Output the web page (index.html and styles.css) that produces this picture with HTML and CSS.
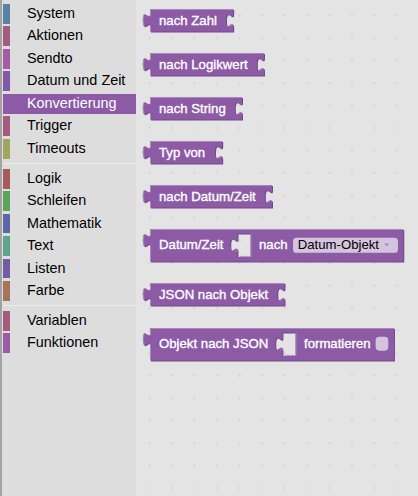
FILE: index.html
```html
<!DOCTYPE html>
<html lang="de">
<head>
<meta charset="utf-8">
<title>Blockly Toolbox</title>
<link rel="stylesheet" href="styles.css">
</head>
<body>
<div class="app">
  <nav class="toolbox">
    <div class="row"><span class="bar c-system"></span><span class="label">System</span></div>
    <div class="row"><span class="bar c-aktionen"></span><span class="label">Aktionen</span></div>
    <div class="row"><span class="bar c-sendto"></span><span class="label">Sendto</span></div>
    <div class="row"><span class="bar c-datum"></span><span class="label">Datum und Zeit</span></div>
    <div class="row sel"><span class="bar c-konv"></span><span class="label">Konvertierung</span></div>
    <div class="row"><span class="bar c-trigger"></span><span class="label">Trigger</span></div>
    <div class="row"><span class="bar c-timeouts"></span><span class="label">Timeouts</span></div>
    <div class="sep"></div>
    <div class="row"><span class="bar c-logik"></span><span class="label">Logik</span></div>
    <div class="row"><span class="bar c-schleifen"></span><span class="label">Schleifen</span></div>
    <div class="row"><span class="bar c-mathe"></span><span class="label">Mathematik</span></div>
    <div class="row"><span class="bar c-text"></span><span class="label">Text</span></div>
    <div class="row"><span class="bar c-listen"></span><span class="label">Listen</span></div>
    <div class="row"><span class="bar c-farbe"></span><span class="label">Farbe</span></div>
    <div class="sep"></div>
    <div class="row"><span class="bar c-variablen"></span><span class="label">Variablen</span></div>
    <div class="row"><span class="bar c-funktionen"></span><span class="label">Funktionen</span></div>
  </nav>

  <main class="flyout">
    <svg class="grid" xmlns="http://www.w3.org/2000/svg">
      <defs>
        <pattern id="dots" patternUnits="userSpaceOnUse" x="2.25" y="4.25" width="22.5" height="22.5">
          <path d="M9.75,11.25 h3 M11.25,9.75 v3" class="gridline"/>
        </pattern>
      </defs>
      <rect width="100%" height="100%" fill="url(#dots)"/>
    </svg>

    <div class="blocks">
      <!-- nach Zahl -->
      <svg class="blk" width="92.2" height="22.5" viewBox="-8 0 92.2 22.5">
        <path class="dark" transform="translate(1,1)" d="M0,0 H83.2 v4.5 c0,9 -7.2,-7.2 -7.2,6.75 s7.2,-2.25 7.2,6.75 V22.5 H0 V18 C0,9 -7.2,25.2 -7.2,11.25 C-7.2,-2.7 0,13.5 0,4.5 Z"/>
        <path class="main" d="M0,0 H83.2 v4.5 c0,9 -7.2,-7.2 -7.2,6.75 s7.2,-2.25 7.2,6.75 V22.5 H0 V18 C0,9 -7.2,25.2 -7.2,11.25 C-7.2,-2.7 0,13.5 0,4.5 Z"/>
        <path class="light" d="M0.5,22 V16.65 m-6.62,-0.45 q-1.37,-4.95 0,-9.9 m6.62,0.9 V0.5 H82.7 M78.7,17.37 l3.3,-1.9"/>
        <text class="t" x="9" y="16.3">nach Zahl</text>
      </svg>

      <!-- nach Logikwert -->
      <svg class="blk" width="123" height="22.5" viewBox="-8 0 123 22.5">
        <path class="dark" transform="translate(1,1)" d="M0,0 H114 v4.5 c0,9 -7.2,-7.2 -7.2,6.75 s7.2,-2.25 7.2,6.75 V22.5 H0 V18 C0,9 -7.2,25.2 -7.2,11.25 C-7.2,-2.7 0,13.5 0,4.5 Z"/>
        <path class="main" d="M0,0 H114 v4.5 c0,9 -7.2,-7.2 -7.2,6.75 s7.2,-2.25 7.2,6.75 V22.5 H0 V18 C0,9 -7.2,25.2 -7.2,11.25 C-7.2,-2.7 0,13.5 0,4.5 Z"/>
        <path class="light" d="M0.5,22 V16.65 m-6.62,-0.45 q-1.37,-4.95 0,-9.9 m6.62,0.9 V0.5 H113.5 M109.5,17.37 l3.3,-1.9"/>
        <text class="t" x="9" y="16.3">nach Logikwert</text>
      </svg>

      <!-- nach String -->
      <svg class="blk" width="101" height="22.5" viewBox="-8 0 101 22.5">
        <path class="dark" transform="translate(1,1)" d="M0,0 H92 v4.5 c0,9 -7.2,-7.2 -7.2,6.75 s7.2,-2.25 7.2,6.75 V22.5 H0 V18 C0,9 -7.2,25.2 -7.2,11.25 C-7.2,-2.7 0,13.5 0,4.5 Z"/>
        <path class="main" d="M0,0 H92 v4.5 c0,9 -7.2,-7.2 -7.2,6.75 s7.2,-2.25 7.2,6.75 V22.5 H0 V18 C0,9 -7.2,25.2 -7.2,11.25 C-7.2,-2.7 0,13.5 0,4.5 Z"/>
        <path class="light" d="M0.5,22 V16.65 m-6.62,-0.45 q-1.37,-4.95 0,-9.9 m6.62,0.9 V0.5 H91.5 M87.5,17.37 l3.3,-1.9"/>
        <text class="t" x="9" y="16.3">nach String</text>
      </svg>

      <!-- Typ von -->
      <svg class="blk" width="81.2" height="22.5" viewBox="-8 0 81.2 22.5">
        <path class="dark" transform="translate(1,1)" d="M0,0 H72.2 v4.5 c0,9 -7.2,-7.2 -7.2,6.75 s7.2,-2.25 7.2,6.75 V22.5 H0 V18 C0,9 -7.2,25.2 -7.2,11.25 C-7.2,-2.7 0,13.5 0,4.5 Z"/>
        <path class="main" d="M0,0 H72.2 v4.5 c0,9 -7.2,-7.2 -7.2,6.75 s7.2,-2.25 7.2,6.75 V22.5 H0 V18 C0,9 -7.2,25.2 -7.2,11.25 C-7.2,-2.7 0,13.5 0,4.5 Z"/>
        <path class="light" d="M0.5,22 V16.65 m-6.62,-0.45 q-1.37,-4.95 0,-9.9 m6.62,0.9 V0.5 H71.7 M67.7,17.37 l3.3,-1.9"/>
        <text class="t" x="9" y="16.3">Typ von</text>
      </svg>

      <!-- nach Datum/Zeit -->
      <svg class="blk" width="131" height="22.5" viewBox="-8 0 131 22.5">
        <path class="dark" transform="translate(1,1)" d="M0,0 H122 v4.5 c0,9 -7.2,-7.2 -7.2,6.75 s7.2,-2.25 7.2,6.75 V22.5 H0 V18 C0,9 -7.2,25.2 -7.2,11.25 C-7.2,-2.7 0,13.5 0,4.5 Z"/>
        <path class="main" d="M0,0 H122 v4.5 c0,9 -7.2,-7.2 -7.2,6.75 s7.2,-2.25 7.2,6.75 V22.5 H0 V18 C0,9 -7.2,25.2 -7.2,11.25 C-7.2,-2.7 0,13.5 0,4.5 Z"/>
        <path class="light" d="M0.5,22 V16.65 m-6.62,-0.45 q-1.37,-4.95 0,-9.9 m6.62,0.9 V0.5 H121.5 M117.5,17.37 l3.3,-1.9"/>
        <text class="t" x="9" y="16.3">nach Datum/Zeit</text>
      </svg>

      <!-- Datum/Zeit [ ] nach [Datum-Objekt] -->
      <svg class="blk" width="262.3" height="32.4" viewBox="-8 0 262.3 32.4">
        <path class="dark" transform="translate(1,1)" fill-rule="evenodd" d="M0,0 H253.3 V32.4 H0 V18 C0,9 -7.2,25.2 -7.2,11.25 C-7.2,-2.7 0,13.5 0,4.5 Z M100.5,4.5 H87.45 v4.5 c0,9 -7.2,-7.2 -7.2,6.75 s7.2,-2.25 7.2,6.75 V27.9 H100.5 Z"/>
        <path class="main" fill-rule="evenodd" d="M0,0 H253.3 V32.4 H0 V18 C0,9 -7.2,25.2 -7.2,11.25 C-7.2,-2.7 0,13.5 0,4.5 Z M100.5,4.5 H87.45 v4.5 c0,9 -7.2,-7.2 -7.2,6.75 s7.2,-2.25 7.2,6.75 V27.9 H100.5 Z"/>
        <path class="light" d="M0.5,31.9 V16.65 m-6.62,-0.45 q-1.37,-4.95 0,-9.9 m6.62,0.9 V0.5 H252.8 M100.95,4.95 v22.5 h-11.25 M85.47,22.14 l3.02,-1.62"/>
        <text class="t" x="9" y="20.3">Datum/Zeit</text>
        <text class="t" x="109" y="20.3">nach</text>
        <rect class="field" x="143" y="8.8" width="105" height="15" rx="3.6"/>
        <text class="ft" x="147.7" y="20.3">Datum-Objekt</text>
        <polygon class="arrow" points="234.2,14.4 239.2,14.4 236.7,17.2"/>
      </svg>

      <!-- JSON nach Objekt -->
      <svg class="blk" width="143.5" height="22.5" viewBox="-8 0 143.5 22.5">
        <path class="dark" transform="translate(1,1)" d="M0,0 H134.5 v4.5 c0,9 -7.2,-7.2 -7.2,6.75 s7.2,-2.25 7.2,6.75 V22.5 H0 V18 C0,9 -7.2,25.2 -7.2,11.25 C-7.2,-2.7 0,13.5 0,4.5 Z"/>
        <path class="main" d="M0,0 H134.5 v4.5 c0,9 -7.2,-7.2 -7.2,6.75 s7.2,-2.25 7.2,6.75 V22.5 H0 V18 C0,9 -7.2,25.2 -7.2,11.25 C-7.2,-2.7 0,13.5 0,4.5 Z"/>
        <path class="light" d="M0.5,22 V16.65 m-6.62,-0.45 q-1.37,-4.95 0,-9.9 m6.62,0.9 V0.5 H134 M130,17.37 l3.3,-1.9"/>
        <text class="t" x="9" y="16.3">JSON nach Objekt</text>
      </svg>

      <!-- Objekt nach JSON [ ] formatieren [x] -->
      <svg class="blk" width="253" height="32.4" viewBox="-8 0 253 32.4">
        <path class="dark" transform="translate(1,1)" fill-rule="evenodd" d="M0,0 H244 V32.4 H0 V18 C0,9 -7.2,25.2 -7.2,11.25 C-7.2,-2.7 0,13.5 0,4.5 Z M145.5,4.5 H132.45 v4.5 c0,9 -7.2,-7.2 -7.2,6.75 s7.2,-2.25 7.2,6.75 V27.9 H145.5 Z"/>
        <path class="main" fill-rule="evenodd" d="M0,0 H244 V32.4 H0 V18 C0,9 -7.2,25.2 -7.2,11.25 C-7.2,-2.7 0,13.5 0,4.5 Z M145.5,4.5 H132.45 v4.5 c0,9 -7.2,-7.2 -7.2,6.75 s7.2,-2.25 7.2,6.75 V27.9 H145.5 Z"/>
        <path class="light" d="M0.5,31.9 V16.65 m-6.62,-0.45 q-1.37,-4.95 0,-9.9 m6.62,0.9 V0.5 H243.5 M145.95,4.95 v22.5 h-11.25 M130.47,22.14 l3.02,-1.62"/>
        <text class="t" x="9" y="20.3">Objekt nach JSON</text>
        <text class="t" x="154" y="20.3">formatieren</text>
        <rect class="field" x="225.7" y="8.7" width="12.6" height="14" rx="3.6"/>
      </svg>
    </div>
  </main>
</div>
</body>
</html>
```

FILE: styles.css
```css
* {
  box-sizing: border-box;
}

html,
body {
  margin: 0;
  padding: 0;
  height: 100%;
}

body {
  font-family: "Liberation Sans", Arial, sans-serif;
  background: #e4e4e4;
  overflow: hidden;
}

.app {
  display: flex;
  height: 496px;
}

/* ---------- toolbox ---------- */
.toolbox {
  flex: none;
  width: 136px;
  background: #dddddd;
  border-left: 2px solid #a3a3a3;
  padding: 4px 0 0 1px;
}

.row {
  display: flex;
  align-items: stretch;
  height: 19.8px;
  margin-bottom: 2.7px;
  font-size: 14.4px;
  line-height: 19.8px;
  color: #000;
  white-space: nowrap;
}

.bar {
  flex: none;
  width: 7.2px;
}

.label {
  padding-left: 16.8px;
}

.row.sel {
  background: #8d5ba6;
  color: #fff;
}

.sep {
  height: 0;
  border-bottom: 1px solid #eaeaea;
  margin: 4.5px 0;
}

.c-system { background: #5b80a5; }
.c-aktionen { background: #a55b80; }
.c-sendto { background: #a55ba5; }
.c-datum { background: #805ba5; }
.c-konv { background: #8d5ba6; }
.c-trigger { background: #a55b80; }
.c-timeouts { background: #a0a65b; }
.c-logik { background: #a55b5b; }
.c-schleifen { background: #5ba55b; }
.c-mathe { background: #5b67a5; }
.c-text { background: #5ba58c; }
.c-listen { background: #745ba5; }
.c-farbe { background: #a5745b; }
.c-variablen { background: #a55b80; }
.c-funktionen { background: #995ba5; }

/* ---------- flyout ---------- */
.flyout {
  flex: 1;
  position: relative;
  background: #e4e4e4;
  overflow: hidden;
}

.grid {
  position: absolute;
  left: 0;
  top: 0;
  width: 100%;
  height: 100%;
}

.gridline {
  stroke: #d6d6d6;
  stroke-width: 1;
  fill: none;
}

.blocks {
  position: relative;
  display: flex;
  flex-direction: column;
  align-items: flex-start;
  gap: 21.6px;
  padding: 9px 0 0 6px;
}

.blk {
  display: block;
  flex: none;
  overflow: visible;
}

.blk .main {
  fill: #8d5ba6;
}

.blk .dark {
  fill: #714985;
}

.blk .light {
  fill: none;
  stroke: #af8cc1;
  stroke-width: 0.9;
}

.blk .t {
  fill: #fff;
  stroke: #fff;
  stroke-width: 0.35px;
  paint-order: stroke;
  font-family: "Liberation Sans", Arial, sans-serif;
  font-size: 13.2px;
}

.blk .field {
  fill: #d5c4de;
}

.blk .ft {
  fill: #000;
  font-family: "Liberation Sans", Arial, sans-serif;
  font-size: 13.2px;
}

.blk .arrow {
  fill: #a88bba;
}
```
